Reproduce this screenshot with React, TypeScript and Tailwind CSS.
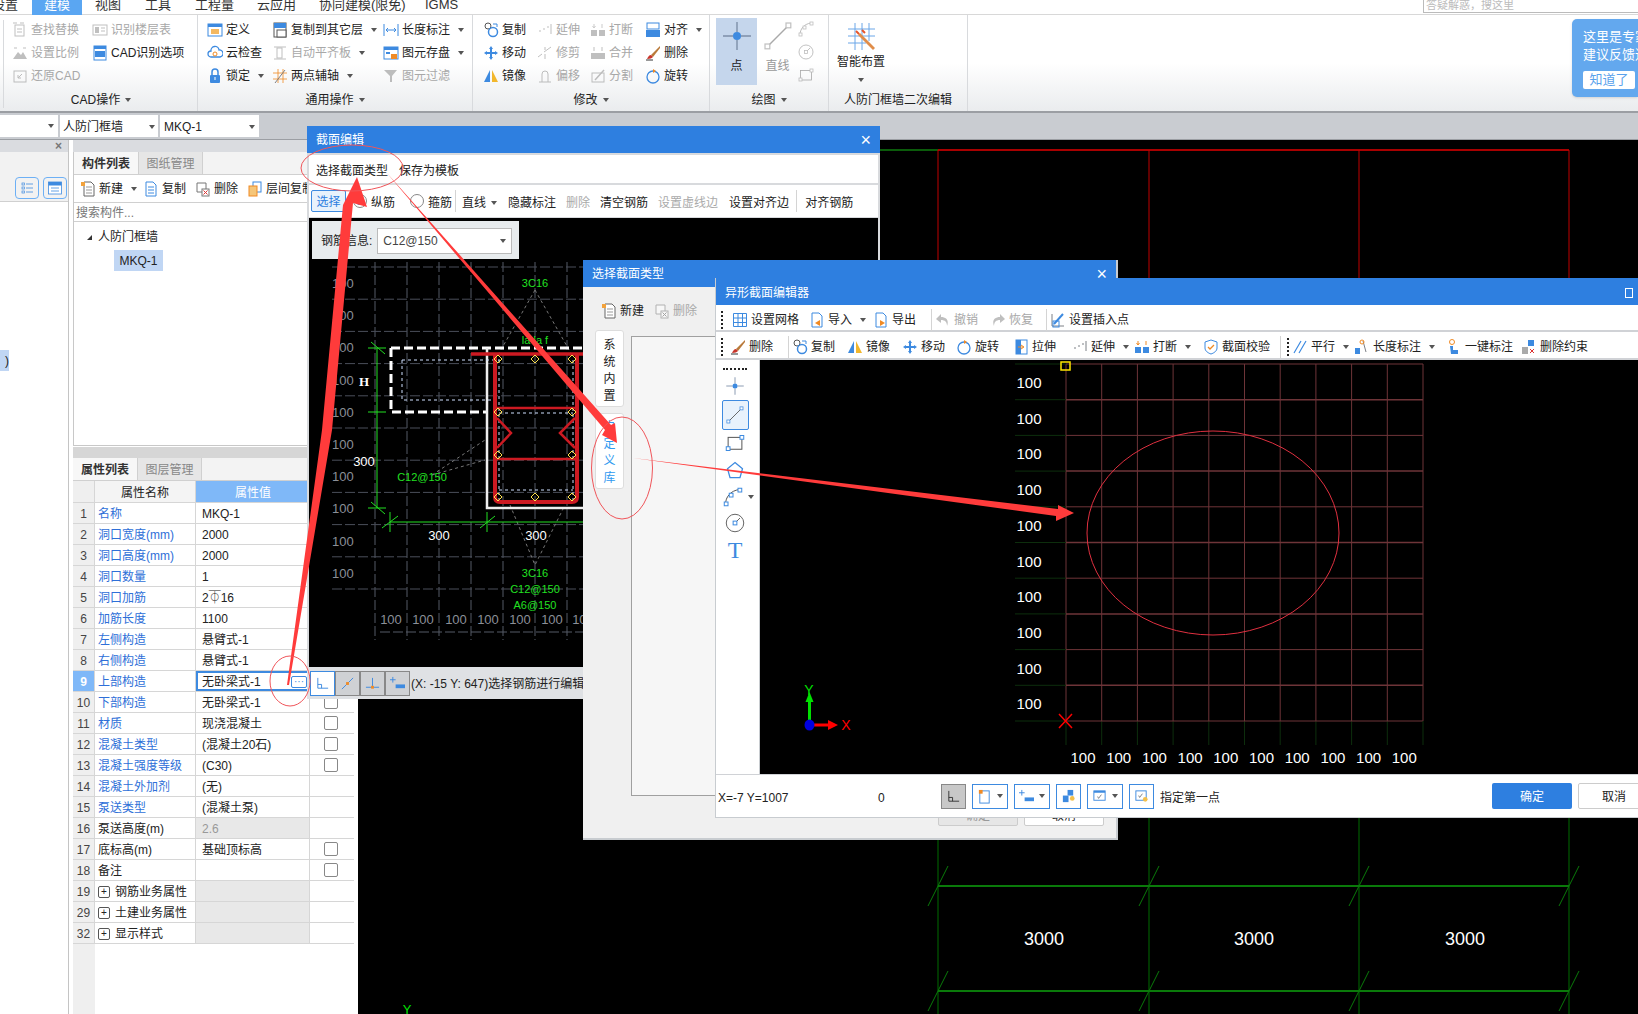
import { FC, ReactNode } from "react";

const B = "#3d8ae0";
const O = "#f08a24";
const G = "#7d8086";
const icons: Record<string, ReactNode> = {
  find: <><rect x="3" y="3" width="9" height="11" fill="none" stroke={G} /><path d="M1 1h4M8 1h4M5 7h5M5 10h5" stroke={G} /></>,
  layers: <><rect x="1" y="3" width="14" height="10" fill="none" stroke={G} /><rect x="3" y="5" width="4" height="6" fill={G} /><path d="M9 6h4M9 9h4" stroke={G} /></>,
  scale: <><path d="M1 14L6 7l3 3 2-3 4 7z" fill={G} /><path d="M2 3h3M11 3h3" stroke={G} /></>,
  cadopt: <><rect x="2" y="1" width="12" height="14" fill="#fff" stroke={B} /><rect x="2" y="1" width="12" height="3" fill={B} /><rect x="3" y="6" width="10" height="6" fill={B} /></>,
  restore: <><rect x="2" y="3" width="12" height="11" fill="none" stroke={G} /><path d="M10 6L6 10M6 7v3h3" stroke={G} fill="none" /></>,
  define: <><rect x="1" y="2" width="14" height="12" fill="#fff" stroke={B} /><rect x="1" y="2" width="14" height="3" fill={B} /><rect x="4" y="7" width="8" height="5" fill="#f4b860" /></>,
  cloud: <><path d="M4 12a3 3 0 010-6 4 4 0 018-1 3.500 3.500 0 011 7z" fill="none" stroke={B} strokeWidth="1.300" /><circle cx="8" cy="9" r="2" fill="none" stroke={O} /></>,
  lock: <><rect x="3" y="7" width="10" height="8" rx="1" fill={B} /><path d="M5 7V4a3 3 0 016 0v3" fill="none" stroke={B} strokeWidth="1.500" /><rect x="7.500" y="9" width="1" height="3" fill="#fff" /></>,
  copyLayer: <><rect x="2" y="1" width="12" height="14" fill="#fff" stroke="#555" /><rect x="2" y="1" width="12" height="5" fill={B} /><rect x="5" y="8" width="9" height="7" fill="#fff" stroke="#555" /></>,
  autoAlign: <><path d="M2 2h12M2 14h12" stroke={G} /><rect x="5" y="3" width="5" height="10" fill="none" stroke={G} /></>,
  axis: <><path d="M1 5h14M1 11h14M6 1v14M11 1v14" stroke={O} strokeWidth=".8" /><path d="M3 15L13 2" stroke={G} /></>,
  lenDim: <><path d="M1 2v12M15 2v12" stroke={B} /><path d="M3 8h10M3 8l2-2M3 8l2 2M13 8l-2-2M13 8l-2 2" stroke={B} fill="none" /></>,
  store: <><rect x="1" y="2" width="14" height="12" fill="#fff" stroke={B} /><rect x="1" y="2" width="14" height="3" fill={B} /><rect x="3" y="7" width="4" height="2" fill={B} /><rect x="8" y="9" width="6" height="5" fill={O} /></>,
  filter: <path d="M1 2h13L9 8v6H7V8z" fill={G} />,
  copy: <><circle cx="5" cy="4" r="3" fill="none" stroke="#555" /><circle cx="10" cy="10" r="4.500" fill="none" stroke={B} strokeWidth="1.500" /><path d="M10 2h4v3" stroke={B} fill="none" /></>,
  extend: <path d="M2 9h2M6 7h2M10 5h2M14 2v10" stroke={G} fill="none" />,
  brk: <><rect x="1" y="8" width="6" height="6" fill={B} /><rect x="9" y="8" width="6" height="6" fill={B} /><path d="M4 2v4M2.500 4l1.500 2 1.500-2M12 2v4" stroke={O} fill="none" /></>,
  align2: <><rect x="2" y="1" width="12" height="6" fill="none" stroke="#3d8ae0" /><rect x="1" y="8" width="14" height="7" fill={B} /></>,
  move: <path d="M8 1l2 3H9v3h3V6l3 2-3 2V9H9v3h1l-2 3-2-3h1V9H4v1L1 8l3-2v1h3V4H6z" fill={B} />,
  trim: <path d="M1 12l4-3M7 7l7-5M8 2v3M8 9v5" stroke={G} fill="none" />,
  merge: <><rect x="1" y="8" width="14" height="6" fill={G} /><path d="M4 2v4M12 2v4" stroke={G} /></>,
  del: <><path d="M15 1L6 10l2 2 7-9z" fill="#b97a3a" /><path d="M6 10c-2 0-3 2-4 4 3 0 5-1 6-2z" fill="#c8352b" /><path d="M1 15h7" stroke="#333" /></>,
  mirror: <><path d="M7 2v12H1z" fill={B} /><path d="M9 2v12h6z" fill="#f2b72c" /></>,
  offset: <><path d="M5 14V6a3 3 0 016 0v8" fill="none" stroke={G} /><path d="M2 14h12" stroke={G} /></>,
  split: <><rect x="2" y="5" width="12" height="9" fill="none" stroke={G} /><path d="M5 12L14 2" stroke={G} strokeWidth="1.500" /></>,
  rotate: <><circle cx="8" cy="9" r="6" fill="none" stroke={B} strokeWidth="1.300" /><path d="M8 1l3 2-3 2z" fill={O} /></>,
  newDoc: <><path d="M4 1h7l3 3v11H4z" fill="#fff" stroke="#666" /><path d="M6 6h6M6 9h6M6 12h6" stroke="#999" /><rect x="1" y="1" width="4" height="4" fill="#f2a23c" /></>,
  copyDoc: <><path d="M3 1h7l3 3v11H3z" fill="#fff" stroke={B} /><path d="M5 6h6M5 9h6M5 12h6" stroke={B} /></>,
  delDoc: <><path d="M2 2h9v9H2z" fill="#fff" stroke="#777" /><rect x="7" y="8" width="7" height="7" fill="#fff" stroke="#777" /><path d="M8.500 9.500l4 4M12.500 9.500l-4 4" stroke="#d33" /></>,
  layerCopy: <><rect x="6" y="1" width="8" height="10" fill="#fff" stroke={B} /><rect x="2" y="5" width="8" height="10" fill="#f5c67a" stroke={O} /></>,
  listA: <><rect x="3" y="3" width="2.500" height="2" fill="none" stroke={B} strokeWidth=".7" /><rect x="3" y="7" width="2.500" height="2" fill="none" stroke={B} strokeWidth=".7" /><rect x="3" y="11" width="2.500" height="2" fill="none" stroke={B} strokeWidth=".7" /><path d="M7 4h7M7 8h7M7 12h7" stroke={B} strokeWidth=".8" /></>,
  listB: <><rect x="1.500" y="2" width="13" height="12" fill="#fff" stroke={B} strokeWidth=".8" /><rect x="1.500" y="2" width="13" height="3.500" fill={B} /><path d="M4 8h8M4 11h8" stroke={B} strokeWidth=".8" /></>,
  grid: <path d="M1.500 1.500h13v13h-13zM1.500 6h13M1.500 10.500h13M6 1.500v13M10.500 1.500v13" fill="none" stroke={B} />,
  imp: <><path d="M3 1h7l3 3v11H3z" fill="#fff" stroke={B} /><path d="M11 8L6 11l5 3z" fill={O} /></>,
  exp: <><path d="M3 1h7l3 3v11H3z" fill="#fff" stroke={B} /><path d="M7 8l5 3-5 3z" fill={O} /></>,
  undo: <path d="M6 2L1 7l5 4V8c4 0 6 2 6 6 2-5 0-9-6-9z" fill={G} />,
  redo: <path d="M10 2l5 5-5 4V8c-4 0-6 2-6 6-2-5 0-9 6-9z" fill={G} />,
  insert: <><path d="M2 2v12M2 14h12" stroke={G} /><path d="M4 12L13 2" stroke={B} strokeWidth="2" /><rect x="3" y="9" width="6" height="6" fill="none" stroke={B} /></>,
  stretch: <><rect x="3" y="1" width="11" height="14" fill="#fff" stroke={B} /><rect x="3" y="1" width="5" height="14" fill={B} /><path d="M5 8h5M8 6l3 2-3 2" stroke={O} fill="none" /></>,
  check: <><path d="M8 1l6 2v6c0 3-3 5-6 6-3-1-6-3-6-6V3z" fill="#fff" stroke={B} /><path d="M5 8l2 2 4-4" stroke={O} fill="none" strokeWidth="1.300" /></>,
  parallel: <path d="M2 14L9 2M7 14L14 2" stroke={B} strokeWidth="1.200" />,
  lenTool: <><path d="M9 2l3 11" stroke={G} /><rect x="1" y="9" width="5" height="6" fill={B} /><circle cx="8" cy="3" r="2" fill="none" stroke={O} /></>,
  oneKey: <><circle cx="6" cy="3" r="2.500" fill="none" stroke={O} /><path d="M4 7h3v4h5v4H5z" fill={B} /></>,
  delCon: <><rect x="7" y="1" width="6" height="6" fill={B} /><rect x="1" y="8" width="6" height="7" fill="#aaa" /><path d="M9 10l4 4M13 10l-4 4" stroke="#d33" /></>,
  point: <><path d="M1 8h5M10 8h5M8 1v5M8 10v5" stroke="#7d8fa8" strokeWidth=".7" /><circle cx="8" cy="8" r="2" fill={B} /></>,
  line: <><path d="M3 13L13 3" stroke="#555" strokeWidth=".7" /><rect x="1.500" y="12" width="2.400" height="2.400" fill="#fff" stroke={B} strokeWidth=".6" /><rect x="12" y="1.500" width="2.400" height="2.400" fill="#fff" stroke={B} strokeWidth=".6" /></>,
  rect: <><rect x="2.500" y="3.500" width="11" height="9.500" fill="none" stroke="#555" strokeWidth=".8" /><rect x="12" y="2" width="3" height="3" fill="#fff" stroke={B} strokeWidth=".8" /><rect x="1" y="11" width="3" height="3" fill="#fff" stroke={B} strokeWidth=".8" /></>,
  pent: <path d="M8 2l6 5-2 7H4L2 7z" fill="none" stroke={B} />,
  arc: <><path d="M2 14C2 8 6 3 13 2" fill="none" stroke="#555" strokeWidth=".8" /><rect x="1" y="12" width="3" height="3" fill="#fff" stroke={B} strokeWidth=".8" /><rect x="12" y="1" width="3" height="3" fill="#fff" stroke={B} strokeWidth=".8" /><rect x="5" y="5" width="3" height="3" fill="#fff" stroke={B} strokeWidth=".8" /></>,
  circle: <><circle cx="8" cy="8" r="7" fill="none" stroke="#666" strokeWidth=".8" /><path d="M8 8l4-4" stroke="#666" strokeWidth=".8" /><rect x="6.500" y="6.500" width="3" height="3" fill="#fff" stroke={B} strokeWidth=".8" /></>,
  corner: <path d="M3 2v11h11M3 9h4v4" stroke="#3d8ae0" fill="none" />,
  cornerK: <path d="M3 2v11h11M3 9h4v4" stroke="#333" fill="none" />,
  snapMid: <><path d="M2 14L14 2" stroke="#3d8ae0" /><rect x="6.500" y="6.500" width="3" height="3" fill={O} /></>,
  snapPerp: <><path d="M8 2v10M1 12h14" stroke="#3d8ae0" /><rect x="6.500" y="10.500" width="3" height="3" fill={O} /></>,
  plusBar: <><path d="M3 1v6M0 4h6" stroke="#3d8ae0" /><rect x="6" y="9" width="10" height="4" fill={B} /></>,
  rectOrange: <><rect x="3" y="2" width="10" height="13" fill="#fff" stroke={B} /><rect x="2" y="1" width="4" height="4" fill={O} /></>,
  bulb: <><rect x="7" y="1" width="6" height="6" fill={B} /><rect x="2" y="7" width="6" height="7" fill={B} /><circle cx="12" cy="10" r="2.500" fill="#f4c04a" /></>,
  checkBox: <><rect x="2" y="2" width="12" height="10" fill="#fff" stroke={B} /><rect x="2" y="2" width="12" height="2" fill={B} /><path d="M6 8l1 2 3-4" stroke={G} fill="none" /></>,
  checkBulb: <><rect x="2" y="2" width="11" height="10" fill="#fff" stroke={B} /><path d="M5 7l1 2 3-4" stroke={G} fill="none" /><circle cx="12" cy="11" r="2.500" fill="#f4c04a" /></>,
};

const Ic: FC<{ n: string; s?: number; off?: boolean }> = ({ n, s = 16, off }) => (
  <svg width={s} height={s} viewBox="0 0 16 16" className={off ? "shrink-0 opacity-50 grayscale" : "shrink-0"}>
    {icons[n]}
  </svg>
);

const Caret = () => <span className="ml-[5px] inline-block h-0 w-0 border-x-[3px] border-t-[4px] border-x-transparent border-t-[#555]" />;

const Item: FC<{ i: string; t: string; off?: boolean; caret?: boolean; w?: number }> = ({ i, t, off, caret, w }) => (
  <div className={`flex h-[23px] shrink-0 items-center gap-[3px] whitespace-nowrap text-xs ${off ? "text-[#a8a8a8]" : "text-[#222]"}`} style={w ? { width: w } : undefined}>
    <Ic n={i} off={off} />
    <span>{t}</span>
    {caret && <Caret />}
  </div>
);

const Col: FC<{ w: number; children: ReactNode }> = ({ w, children }) => (
  <div className="flex shrink-0 flex-col" style={{ width: w }}>
    {children}
  </div>
);

const Group: FC<{ w: number; pl: number; label: string; caret?: boolean; children: ReactNode }> = ({ w, pl, label, caret = true, children }) => (
  <div className="flex shrink-0 flex-col border-r border-[#d8dadd]" style={{ width: w }}>
    <div className="flex h-[74px] pt-[3px]" style={{ paddingLeft: pl }}>
      {children}
    </div>
    <div className="flex h-[22px] items-center justify-center text-xs text-[#222]">
      {label}
      {caret && <Caret />}
    </div>
  </div>
);

const rows: [string, string, string, string?][] = [
  ["1", "名称", "MKQ-1"],
  ["2", "洞口宽度(mm)", "2000"],
  ["3", "洞口高度(mm)", "2000"],
  ["4", "洞口数量", "1"],
  ["5", "洞口加筋", "2⏁16"],
  ["6", "加筋长度", "1100"],
  ["7", "左侧构造", "悬臂式-1"],
  ["8", "右侧构造", "悬臂式-1"],
  ["9", "上部构造", "无卧梁式-1", "edit"],
  ["10", "下部构造", "无卧梁式-1", "c"],
  ["11", "材质", "现浇混凝土", "c"],
  ["12", "混凝土类型", "(混凝土20石)", "c"],
  ["13", "混凝土强度等级", "(C30)", "c"],
  ["14", "混凝土外加剂", "(无)"],
  ["15", "泵送类型", "(混凝土泵)"],
  ["16", "泵送高度(m)", "2.6", "k"],
  ["17", "底标高(m)", "基础顶标高", "ck"],
  ["18", "备注", "", "ck"],
  ["19", "钢筋业务属性", "", "g"],
  ["29", "土建业务属性", "", "g"],
  ["32", "显示样式", "", "g"],
];

const PropRow: FC<{ r: [string, string, string, string?] }> = ({ r }) => {
  const [no, name, val, flag = ""] = r;
  const edit = flag === "edit";
  const group = flag === "g";
  const black = flag === "k" || flag === "ck" || group;
  return (
    <div className="flex h-[21px] border-b border-[#d6d6d6] text-xs">
      <div className={`flex w-[22px] items-center justify-center border-r border-[#d6d6d6] pt-[2px] ${edit ? "bg-[#7fb8f8] font-bold text-white" : "bg-[#efefef] text-[#444]"}`}>{no}</div>
      <div className={`flex w-[101px] items-center gap-[5px] border-r border-[#d6d6d6] pl-[3px] pt-[2px] ${black ? "text-[#222]" : "text-[#2e6fd8]"}`}>
        {group && <span className="flex h-[12px] w-[12px] items-center justify-center rounded-[2px] border border-[#555] text-[10px] leading-none">+</span>}
        {name}
      </div>
      {edit ? (
        <div className="flex w-[114px] items-center justify-between border-2 border-[#3d8ae0] bg-white pl-[4px] pr-[1px] pt-[1px] text-[#222]">
          {val}
          <span className="flex h-[12px] w-[16px] items-center justify-center rounded-[2px] border border-[#3d8ae0] text-[10px] leading-none text-[#3d8ae0]">···</span>
        </div>
      ) : (
        <div className={`flex w-[114px] items-center border-r border-[#d6d6d6] pl-[6px] pt-[2px] ${flag === "k" ? "bg-[#e8e8e8] text-[#999]" : group ? "bg-[#e8e8e8]" : "text-[#222]"}`}>{val}</div>
      )}
      <div className="flex flex-1 items-center justify-center pr-[2px]">
        {(flag === "c" || flag === "ck") && <span className="h-[14px] w-[14px] rounded-[2px] border border-[#888] bg-white" />}
      </div>
    </div>
  );
};

const Tabs: FC<{ a: string; b: string }> = ({ a, b }) => (
  <div className="flex h-[23px] shrink-0 border-b border-[#d0d0d0] bg-[#f3f3f3] text-xs">
    <div className="flex w-[65px] items-center justify-center border-r border-[#d0d0d0] bg-[#f7f7f7] pt-[2px] font-bold text-[#333]">{a}</div>
    <div className="flex w-[64px] items-center justify-center border-r border-[#d0d0d0] bg-[#e6e6e6] pt-[2px] text-[#888]">{b}</div>
  </div>
);

const Range = (n: number) => Array.from({ length: n }, (_, i) => i);

const MainCanvas = () => (
  <svg className="h-full w-full" viewBox="358 140 1280 874">
    <path d="M880 150H938" stroke="#0b5c0b" strokeWidth="2" />
    <path d="M938 150H1569" stroke="#a80000" strokeWidth="2" />
    {[938, 1149, 1359, 1569].map((x) => (
      <g key={x}>
        <path d={`M${x} 150V620`} stroke="#c00000" />
        <path d={`M${x} 800V1014`} stroke="#006c00" />
        <path d={`M${x - 10} 906L${x + 10} 866M${x - 10} 1011L${x + 10} 971`} stroke="#0a7a0a" />
      </g>
    ))}
    <path d="M938 886H1569M938 991H1569" stroke="#0a7a0a" strokeWidth="2" />
    {[1044, 1254, 1465].map((x) => (
      <text key={x} x={x} y="945" fill="#fff" fontSize="18" textAnchor="middle">3000</text>
    ))}
    <text x="407" y="1014" fill="#00e000" fontSize="13" textAnchor="middle">Y</text>
  </svg>
);

const SectionCanvas = () => (
  <svg className="h-full w-full" viewBox="309 218 569 449">
    {Range(8).map((i) => (
      <path key={i} d={`M${375 + 32 * i} 262V640`} stroke="#555b66" strokeDasharray="10 3" />
    ))}
    {Range(11).map((i) => (
      <path key={i} d={`M332 ${267 + 32.2 * i}H600`} stroke="#4a4f5a" strokeDasharray="10 3" />
    ))}
    {Range(10).map((i) => (
      <text key={i} x="332" y={288 + 32.2 * i} fill="#8b8f98" fontSize="13">100</text>
    ))}
    {[391, 423, 456, 488, 520, 552, 583].map((x) => (
      <text key={x} x={x} y="624" fill="#8b8f98" fontSize="13" textAnchor="middle">100</text>
    ))}
    <path d="M380 632H600" stroke="#555b66" strokeDasharray="10 3" />
    <path d="M535 290L498 355M535 290L572 355M510 505L535 565L565 505M432 475L485 440M432 475L485 460" stroke="#777" strokeDasharray="3 3" fill="none" />
    <path d="M391 348H590M391 348V412H486" stroke="#fff" strokeWidth="3" strokeDasharray="9 4" fill="none" />
    <path d="M487 348V508H590" stroke="#eee" strokeWidth="2.500" fill="none" />
    <path d="M402 360H500M402 360V400H500" stroke="#cfe0ff" strokeDasharray="3 3" fill="none" />
    <path d="M499 360V500M573 360V500M499 413H573M499 490H573" stroke="#cfe0ff" strokeDasharray="3 3" fill="none" />
    <path d="M471 354H590" stroke="#cc1a22" strokeWidth="3.500" />
    <path d="M495 354V497Q495 502 500 502H572Q577 502 577 497V354" stroke="#cc1a22" strokeWidth="4" fill="none" />
    <path d="M495 408H577M495 459H577" stroke="#cc1a22" strokeWidth="2.500" />
    <path d="M497 418L511 433L497 448M575 418L560 433L575 448" stroke="#cc1a22" strokeWidth="2.500" fill="none" />
    {[[498, 359], [535, 359], [572, 359], [498, 412], [572, 412], [498, 455], [572, 455], [498, 497], [535, 497], [572, 497]].map(([x, y]) => (
      <path key={`${x}-${y}`} d={`M${x} ${y - 4}l4 4-4 4-4-4z`} fill="none" stroke="#ffe14d" />
    ))}
    <path d="M377 348V508M368 348H386M368 508H386M368 412H386M371 342L385 354M371 502L385 514M390 522H590M390 512V532M487 512V532M382 528L398 516M480 528L495 516" stroke="#22e022" fill="none" />
    <g fill="#22e022" fontSize="11" textAnchor="middle">
      <text x="535" y="287">3C16</text>
      <text x="422" y="481">C12@150</text>
      <text x="535" y="577">3C16</text>
      <text x="535" y="593">C12@150</text>
      <text x="535" y="609">A6@150</text>
      <text x="535" y="344">la la f</text>
    </g>
    <g fill="#fff" fontSize="13" textAnchor="middle">
      <text x="364" y="466">300</text>
      <text x="439" y="540">300</text>
      <text x="536" y="540">300</text>
      <text x="364" y="386" fontFamily="Liberation Serif" fontWeight="bold">H</text>
    </g>
  </svg>
);

const EditorCanvas = () => (
  <svg className="h-full w-full" viewBox="760 360 885 414">
    {Range(11).map((i) => (
      <g key={i}>
        <path d={`M${1066 + 35.7 * i} 364V721`} stroke="#6e3438" />
        <path d={`M1066 ${364 + 35.7 * i}H1423`} stroke="#6e3438" strokeWidth={i % 2 ? 1.5 : 1} />
        <path d={`M${1066 + 35.7 * i} 721V745`} stroke="#0d2e0d" />
        <path d={`M1015 ${364 + 35.7 * i}H1066`} stroke="#0d2e0d" />
      </g>
    ))}
    {Range(10).map((i) => (
      <g key={i} fill="#fff" fontSize="15">
        <text x="1029" y={388 + 35.7 * i} textAnchor="middle">100</text>
        <text x={1083 + 35.7 * i} y="763" textAnchor="middle">100</text>
      </g>
    ))}
    <rect x="1061" y="362" width="9" height="8" fill="none" stroke="#ffe600" strokeWidth="1.500" />
    <path d="M1059 714L1072 728M1072 714L1059 728" stroke="#f00" strokeWidth="1.500" />
    <ellipse cx="1213" cy="533" rx="126" ry="102" fill="none" stroke="#e03040" />
    <path d="M809.500 697V725" stroke="#00e000" strokeWidth="3" />
    <path d="M809.500 692l4 10h-8z" fill="#00e000" />
    <path d="M810 725H830" stroke="#f00" strokeWidth="3" />
    <path d="M838 725l-10-5v10z" fill="#f00" />
    <ellipse cx="809.500" cy="725" rx="5" ry="5.500" fill="#0000e0" />
    <text x="809" y="695" fill="#00e000" fontSize="14" textAnchor="middle">Y</text>
    <text x="846" y="730" fill="#f00" fontSize="14" textAnchor="middle">X</text>
  </svg>
);

const Grip = () => <div className="mx-[3px] h-[18px] w-0 shrink-0 border-l-2 border-dotted border-[#222]" />;
const Sep = () => <div className="mx-[3px] h-[22px] w-px shrink-0 bg-[#d4d4d4]" />;

const StatusBtn: FC<{ w: number; on?: boolean; blue?: boolean; caret?: boolean; n: string }> = ({ w, on, blue, caret, n }) => (
  <div className={`flex h-[25px] shrink-0 items-center justify-center border ${on ? "border-[#888] bg-[#c8c8c8]" : blue ? "border-[#3d8ae0] bg-white" : "border-[#888] bg-[#cfd1d4]"}`} style={{ width: w }}>
    <Ic n={n} s={15} />
    {caret && <Caret />}
  </div>
);

export default function App() {
  return (
    <div className="relative flex h-[1014px] w-[1638px] flex-col overflow-hidden bg-white font-['Liberation_Sans','Noto_Sans_CJK_SC',sans-serif] text-xs text-[#222]">
      {/* menu */}
      <div className="relative flex h-[15px] shrink-0 items-start border-b border-[#d8d8d8] bg-white text-[13px] leading-[10px] text-[#333]">
        <span className="ml-[-8px] w-[40px]">设置</span>
        <span className="flex h-[15px] w-[50px] items-start justify-center bg-[#5aa6f2] text-white">建模</span>
        <span className="ml-[13px] w-[50px]">视图</span>
        <span className="w-[50px]">工具</span>
        <span className="w-[62px]">工程量</span>
        <span className="w-[62px]">云应用</span>
        <span className="w-[106px]">协同建模(限免)</span>
        <span>IGMS</span>
        <div className="ml-auto h-[13px] w-[215px] border-b border-l border-[#bbb] pl-[2px] text-[11px] text-[#bbb]">答疑解惑，搜这里</div>
      </div>

      {/* ribbon */}
      <div className="relative flex h-[98px] shrink-0 border-b-2 border-[#9b9ea3] bg-gradient-to-b from-white from-50% to-[#eaecee] pl-[5px]">
        <div className="absolute left-0 top-[5px] h-[88px] w-[4px] border-r border-[#d8dadd]" />
        <Group w={193} pl={7} label="CAD操作">
          <Col w={80}>
            <Item i="find" t="查找替换" off />
            <Item i="scale" t="设置比例" off />
            <Item i="restore" t="还原CAD" off />
          </Col>
          <Col w={100}>
            <Item i="layers" t="识别楼层表" off />
            <Item i="cadopt" t="CAD识别选项" />
          </Col>
        </Group>
        <Group w={275} pl={9} label="通用操作">
          <Col w={65}>
            <Item i="define" t="定义" />
            <Item i="cloud" t="云检查" />
            <Item i="lock" t="锁定" caret />
          </Col>
          <Col w={111}>
            <Item i="copyLayer" t="复制到其它层" caret />
            <Item i="autoAlign" t="自动平齐板" off caret />
            <Item i="axis" t="两点辅轴" caret />
          </Col>
          <Col w={90}>
            <Item i="lenDim" t="长度标注" caret />
            <Item i="store" t="图元存盘" caret />
            <Item i="filter" t="图元过滤" off />
          </Col>
        </Group>
        <Group w={237} pl={10} label="修改">
          <Col w={54}>
            <Item i="copy" t="复制" />
            <Item i="move" t="移动" />
            <Item i="mirror" t="镜像" />
          </Col>
          <Col w={53}>
            <Item i="extend" t="延伸" off />
            <Item i="trim" t="修剪" off />
            <Item i="offset" t="偏移" off />
          </Col>
          <Col w={55}>
            <Item i="brk" t="打断" off />
            <Item i="merge" t="合并" off />
            <Item i="split" t="分割" off />
          </Col>
          <Col w={60}>
            <Item i="align2" t="对齐" caret />
            <Item i="del" t="删除" />
            <Item i="rotate" t="旋转" />
          </Col>
        </Group>
        <Group w={119} pl={6} label="绘图">
          <div className="flex h-[67px] w-[41px] flex-col items-center bg-[#c5d6ec] pt-[2px]">
            <Ic n="point" s={32} />
            <span className="mt-[6px]">点</span>
          </div>
          <div className="flex h-[67px] w-[41px] flex-col items-center pt-[2px] text-[#999]">
            <Ic n="line" s={32} off />
            <span className="mt-[6px]">直线</span>
          </div>
          <div className="flex flex-col gap-[7px] pt-[3px]">
            <Ic n="arc" s={16} off />
            <Ic n="circle" s={16} off />
            <Ic n="rect" s={16} off />
          </div>
        </Group>
        <Group w={139} pl={7} label="人防门框墙二次编辑" caret={false}>
          <div className="flex w-[50px] flex-col items-center">
            <svg width="30" height="30" viewBox="0 0 30 30" className="mt-[3px]">
              <path d="M2 8h27M2 15h27M2 22h18M9 2v27M16 2v27M23 2v18" stroke="#6aa6e8" />
              <path d="M12 14l15 15 2-2-15-15z" fill="#e08d4a" />
              <path d="M10 10l3 3M16 9l3 3" stroke="#e8552a" strokeWidth="2" />
            </svg>
            <span className="mt-[3px] whitespace-nowrap">智能布置</span>
            <span className="mt-[8px] h-0 w-0 border-x-[3px] border-t-[4px] border-x-transparent border-t-[#555]" />
          </div>
        </Group>
        <div className="absolute right-0 top-[4px] flex h-[78px] w-[66px] flex-col rounded-l-[5px] bg-[#63a8ee] pl-[11px] pt-[9px] text-[13px] leading-[18px] text-white shadow">
          <span className="whitespace-nowrap">这里是专家</span>
          <span className="whitespace-nowrap">建议反馈通</span>
          <span className="mt-[7px] flex h-[18px] w-[52px] items-center justify-center rounded-[2px] bg-white text-[#5aa2ec]">知道了</span>
        </div>
      </div>

      {/* selector bar */}
      <div className="flex h-[27px] shrink-0 items-start gap-[2px] border-b border-[#9b9ea3] bg-[#c9ccd1] pt-[2px]">
        <div className="flex h-[22px] w-[58px] items-center justify-end bg-white pr-[4px]"><Caret /></div>
        <div className="flex h-[22px] w-[98px] items-center justify-between bg-white px-[3px] pt-[2px]">人防门框墙<Caret /></div>
        <div className="flex h-[22px] w-[99px] items-center justify-between bg-white px-[4px] pt-[2px]">MKQ-1<Caret /></div>
      </div>

      {/* body */}
      <div className="flex min-h-0 flex-1">
        <div className="flex w-[69px] shrink-0 flex-col border-r border-[#c4c4c4] bg-white">
          <div className="flex h-[12px] items-center justify-end bg-[#dadce0] pr-[6px] text-[12px] font-bold leading-none text-[#777]">×</div>
          <div className="flex h-[50px] items-end gap-[4px] border-b border-[#d0d0d0] bg-[#f2f2f2] pb-[2px] pl-[15px]">
            <span className="flex h-[22px] w-[24px] items-center justify-center rounded-[4px] border border-[#6db0f5]"><Ic n="listA" /></span>
            <span className="flex h-[22px] w-[24px] items-center justify-center rounded-[4px] border border-[#6db0f5]"><Ic n="listB" /></span>
          </div>
          <div className="mt-[148px] flex h-[21px] w-[9px] items-center justify-end overflow-hidden bg-[#c0d6f4]">)</div>
        </div>
        <div className="flex w-[289px] shrink-0 flex-col bg-white pl-[4px] pr-[4px]">
          <div className="h-[12px] shrink-0 bg-[#dadce0]" />
          <div className="flex h-[294px] shrink-0 flex-col border border-t-0 border-[#c8c8c8]">
            <Tabs a="构件列表" b="图纸管理" />
            <div className="flex h-[28px] shrink-0 items-center border-b border-[#d0d0d0] pl-[6px] pt-[1px]">
              <Item i="newDoc" t="新建" caret w={63} />
              <Item i="copyDoc" t="复制" w={52} />
              <Item i="delDoc" t="删除" w={52} />
              <Item i="layerCopy" t="层间复制" />
            </div>
            <div className="flex h-[19px] shrink-0 items-center border-b border-[#d0d0d0] pl-[2px] pt-[2px] text-[#777]">搜索构件...</div>
            <div className="flex h-[28px] items-center pl-[13px] pt-[2px]">
              <span className="mr-[6px] h-0 w-0 border-b-[5px] border-l-[5px] border-b-[#333] border-l-transparent" />
              人防门框墙
            </div>
            <div className="ml-[40px] flex h-[21px] w-[49px] items-center justify-center bg-[#c0d6f4]">MKQ-1</div>
          </div>
          <div className="mt-[1px] h-[11px] shrink-0 bg-[#d6d6d6]" />
          <Tabs a="属性列表" b="图层管理" />
          <div className="flex h-[22px] shrink-0 border-b border-[#d6d6d6] text-xs">
            <div className="w-[22px] border-r border-[#d6d6d6] bg-[#efefef]" />
            <div className="flex w-[101px] items-center justify-center border-r border-[#d6d6d6] bg-[#f4f4f4] pt-[2px]">属性名称</div>
            <div className="flex w-[114px] items-center justify-center bg-[#7fb8f8] pt-[2px] text-white">属性值</div>
          </div>
          <div className="relative flex-1">
            <div className="absolute bottom-0 left-0 top-0 w-[22px] bg-[#efefef]" />
            <div className="relative">
              {rows.map((r) => (
                <PropRow key={r[0]} r={r} />
              ))}
            </div>
          </div>
        </div>
        <div className="min-w-0 flex-1 bg-black">
          <MainCanvas />
        </div>
      </div>

      {/* 截面编辑 */}
      <div className="absolute left-[307px] top-[126px] flex h-[573px] w-[573px] flex-col bg-[#d8dadd]">
        <div className="flex h-[27px] shrink-0 items-center justify-between bg-[#2e7fe0] pl-[9px] pr-[9px] pt-[1px] text-white">
          截面编辑<span className="text-[18px] leading-none">×</span>
        </div>
        <div className="mx-[2px] mt-[2px] flex h-[28px] shrink-0 items-center gap-[11px] bg-white pl-[7px] pt-[3px]">
          <span>选择截面类型</span>
          <span>保存为模板</span>
        </div>
        <div className="mx-[2px] mt-[2px] flex h-[32px] shrink-0 items-center bg-white pl-[2px]">
          <span className="flex h-[22px] w-[35px] items-center justify-center rounded-[2px] border border-[#3d8ae0] bg-[#e8f2fc] pt-[2px] text-[#2e7fe0]">选择</span>
          <span className="ml-[7px] flex h-[14px] w-[14px] items-center justify-center rounded-full border border-[#888]"><span className="h-[8px] w-[8px] rounded-full bg-[#2e7fe0]" /></span>
          <span className="ml-[4px] pt-[3px]">纵筋</span>
          <span className="ml-[15px] h-[14px] w-[14px] rounded-full border border-[#888]" />
          <span className="ml-[4px] pt-[3px]">箍筋</span>
          <Sep />
          <span className="ml-[3px] flex items-center pt-[3px]">直线<Caret /></span>
          <span className="ml-[11px] pt-[3px]">隐藏标注</span>
          <span className="ml-[10px] pt-[3px] text-[#aaa]">删除</span>
          <span className="ml-[10px] pt-[3px]">清空钢筋</span>
          <span className="ml-[10px] pt-[3px] text-[#aaa]">设置虚线边</span>
          <span className="ml-[11px] pt-[3px]">设置对齐边</span>
          <span className="ml-[4px]"><Sep /></span>
          <span className="ml-[5px] pt-[3px]">对齐钢筋</span>
        </div>
        <div className="relative mx-[2px] mt-[1px] min-h-0 flex-1 bg-black">
          <SectionCanvas />
          <div className="absolute left-[3px] top-[3px] flex h-[38px] w-[207px] items-center gap-[5px] bg-[#e8ecee] pl-[9px] pt-[2px]">
            钢筋信息:
            <div className="flex h-[26px] w-[135px] items-center justify-between border border-[#bbb] bg-white px-[5px] text-[#444]">C12@150<Caret /></div>
          </div>
        </div>
        <div className="flex h-[32px] shrink-0 items-center bg-[#dfe1e4] pl-[3px]">
          <StatusBtn w={25} n="corner" blue />
          <StatusBtn w={25} n="snapMid" />
          <StatusBtn w={25} n="snapPerp" />
          <StatusBtn w={25} n="plusBar" />
          <span className="ml-px whitespace-nowrap pt-[2px]">(X: -15 Y: 647)选择钢筋进行编辑</span>
        </div>
      </div>

      {/* 选择截面类型 */}
      <div className="absolute left-[583px] top-[260px] flex h-[580px] w-[535px] flex-col border-b-2 border-r-2 border-[#c8ccd0] bg-[#f0f0f0]">
        <div className="flex h-[27px] shrink-0 items-center justify-between bg-[#2e7fe0] pl-[9px] pr-[9px] pt-[1px] text-white">
          选择截面类型<span className="text-[18px] leading-none">×</span>
        </div>
        <div className="flex h-[43px] shrink-0 items-center gap-[10px] pl-[18px] pt-[5px]">
          <Item i="newDoc" t="新建" />
          <Item i="delDoc" t="删除" off />
        </div>
        <div className="flex min-h-0 flex-1 pl-[12px]">
          <div className="flex w-[29px] shrink-0 flex-col gap-[6px]">
            <div className="flex h-[77px] flex-col items-center justify-center gap-[3px] rounded-[3px] border border-[#ddd] bg-white pt-[3px] leading-[14px]">
              <span>系</span><span>统</span><span>内</span><span>置</span>
            </div>
            <div className="flex h-[76px] flex-col items-center justify-center gap-[3px] rounded-[3px] border border-[#ddd] bg-white pt-[3px] leading-[14px] text-[#2f9af0]">
              <span>自</span><span>定</span><span>义</span><span>库</span>
            </div>
          </div>
          <div className="ml-[7px] mt-[6px] h-[460px] w-[440px] border border-[#a0a0a0] bg-[#f6f6f6]" />
        </div>
        <div className="flex h-[44px] justify-end gap-[6px] pr-[12px] pt-[12px]">
          <span className="flex h-[20px] w-[80px] items-center justify-center rounded-[2px] border border-[#ccc] bg-[#e6e6e6] text-[#999]">确定</span>
          <span className="flex h-[20px] w-[80px] items-center justify-center rounded-[2px] border border-[#ccc] bg-white">取消</span>
        </div>
      </div>

      {/* 异形截面编辑器 */}
      <div className="absolute left-[715px] top-[278px] flex h-[540px] w-[930px] flex-col border-b border-l border-[#c8ccd0] bg-white">
        <div className="flex h-[27px] shrink-0 items-center justify-between bg-[#2e7fe0] pl-[9px] pr-[12px] pt-[2px] text-white">
          异形截面编辑器<span className="h-[10px] w-[8px] border border-white" />
        </div>
        <div className="flex h-[27px] shrink-0 items-center border-b-2 border-[#d0d2d6] pl-[2px] pt-[5px]">
          <Grip />
          <span className="w-[6px]" />
          <Item i="grid" t="设置网格" w={77} />
          <Item i="imp" t="导入" caret w={64} />
          <Item i="exp" t="导出" w={55} />
          <Sep />
          <Item i="undo" t="撤销" off w={55} />
          <Item i="redo" t="恢复" off w={53} />
          <Sep />
          <Item i="insert" t="设置插入点" />
        </div>
        <div className="flex h-[28px] shrink-0 items-center border-b-2 border-[#d0d2d6] pl-[2px] pt-[4px]">
          <Grip />
          <span className="w-[4px]" />
          <Item i="del" t="删除" w={55} />
          <Sep />
          <Item i="copy" t="复制" w={55} />
          <Item i="mirror" t="镜像" w={55} />
          <Item i="move" t="移动" w={54} />
          <Item i="rotate" t="旋转" w={57} />
          <Item i="stretch" t="拉伸" w={59} />
          <Item i="extend" t="延伸" caret w={62} />
          <Item i="brk" t="打断" caret w={69} />
          <Item i="check" t="截面校验" w={74} />
          <Sep />
          <Grip />
          <Item i="parallel" t="平行" caret w={62} />
          <Item i="lenTool" t="长度标注" caret w={92} />
          <Item i="oneKey" t="一键标注" w={75} />
          <Item i="delCon" t="删除约束" />
        </div>
        <div className="flex min-h-0 flex-1">
          <div className="flex w-[44px] shrink-0 flex-col items-center border-r border-[#c8ccd0] bg-white pr-[5px]">
            <div className="mt-[8px] h-0 w-[24px] border-t-2 border-dotted border-[#222]" />
            <div className="mt-[6px]"><Ic n="point" s={20} /></div>
            <div className="mt-[4px] flex h-[30px] w-[27px] items-center justify-center rounded-[2px] border border-[#3d8ae0] bg-[#e8f2fc]"><Ic n="line" s={20} /></div>
            <div className="mt-[3px]"><Ic n="rect" s={20} /></div>
            <div className="mt-[7px]"><Ic n="pent" s={20} /></div>
            <div className="mt-[7px] flex items-center pl-[6px]"><Ic n="arc" s={20} /><Caret /></div>
            <div className="mt-[6px]"><Ic n="circle" s={20} /></div>
            <span className="mt-[3px] font-['Liberation_Serif',serif] text-[24px] leading-[28px] text-[#3d8ae0]">T</span>
          </div>
          <div className="min-w-0 flex-1 bg-black">
            <EditorCanvas />
          </div>
        </div>
        <div className="flex h-[43px] shrink-0 items-center border-t border-[#d0d2d6] bg-white">
          <span className="ml-[2px] w-[160px] shrink-0 whitespace-nowrap pt-[3px]">X=-7 Y=1007</span>
          <span className="w-[63px] shrink-0 pt-[3px]">0</span>
          <StatusBtn w={25} n="cornerK" on />
          <span className="ml-[6px] shrink-0"><StatusBtn w={36} n="rectOrange" blue caret /></span>
          <span className="ml-[6px] shrink-0"><StatusBtn w={36} n="plusBar" blue caret /></span>
          <span className="ml-[6px] shrink-0"><StatusBtn w={25} n="bulb" blue /></span>
          <span className="ml-[6px] shrink-0"><StatusBtn w={36} n="checkBox" blue caret /></span>
          <span className="ml-[6px] shrink-0"><StatusBtn w={25} n="checkBulb" blue /></span>
          <span className="ml-[6px] shrink-0 whitespace-nowrap pt-[3px]">指定第一点</span>
          <span className="ml-[272px] flex h-[26px] w-[80px] shrink-0 items-center justify-center rounded-[2px] bg-[#2e7fe0] pt-[2px] text-white">确定</span>
          <span className="ml-[6px] flex h-[26px] w-[72px] shrink-0 items-center justify-center rounded-[2px] border border-[#ccc] bg-white pt-[2px]">取消</span>
        </div>
      </div>

      {/* annotations */}
      <svg className="pointer-events-none absolute left-0 top-0" width="1638" height="1014" viewBox="0 0 1638 1014">
        <g fill="#ff3b3b">
          <polygon points="357,177 367,207 353,203 332,430 289,685 287,685 322,430 343,205 342,207" />
          <polygon points="617,443 602,435 605,430 386,172 611,425 615,423" />
          <polygon points="1074,513 1056,521 1056,516 633,458 1058,509 1058,505" />
        </g>
        <g fill="none" stroke="#f0555a">
          <ellipse cx="352" cy="168" rx="51" ry="23" />
          <ellipse cx="622" cy="468" rx="30.500" ry="51" />
          <ellipse cx="290" cy="681" rx="20" ry="25" />
        </g>
      </svg>
    </div>
  );
}
